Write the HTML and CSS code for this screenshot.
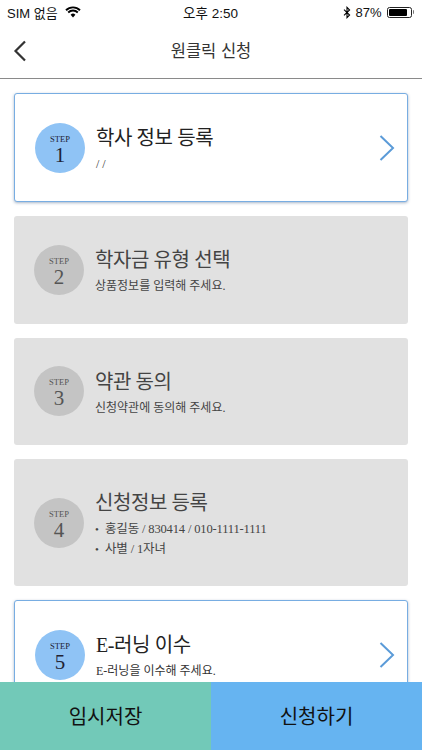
FILE: index.html
```html
<!DOCTYPE html>
<html lang="ko">
<head>
<meta charset="utf-8">
<title>원클릭 신청</title>
<link rel="stylesheet" href="styles.css">
</head>
<body>
<div class="app">
  <div class="status">
    <div class="status-left">
      <span>SIM 없음</span>
      <svg class="wifi" width="16" height="12" viewBox="0 0 16 12"><path d="M8 11.5 5.6 8.8a3.4 3.4 0 0 1 4.8 0Z" fill="#000"/><path d="M1 4.2a10 10 0 0 1 14 0M3.2 6.5a6.9 6.9 0 0 1 9.6 0" fill="none" stroke="#000" stroke-width="1.9"/></svg>
    </div>
    <div class="status-time">오후 2:50</div>
    <div class="status-right">
      <svg width="8" height="13" viewBox="0 0 8 13"><path d="M1 3.6 6.6 9 4 11.6V1.4L6.6 4 1 9.4" fill="none" stroke="#000" stroke-width="1.1"/></svg>
      <span>87%</span>
      <span class="battery"><span class="battery-fill"></span></span>
      <span class="battery-tip"></span>
    </div>
  </div>
  <header class="nav">
    <svg class="back" width="14" height="22" viewBox="0 0 14 22"><path d="M12 1.5 2.5 11l9.500 9.500" fill="none" stroke="#333" stroke-width="2.200"/></svg>
    <h1 class="nav-title">원클릭 신청</h1>
  </header>
  <main class="steps">
    <section class="card card-active card-s1">
      <div class="badge"><span class="badge-label">STEP</span><span class="badge-num">1</span></div>
      <div class="info"><h2 class="info-title">학사 정보 등록</h2><p class="info-sub">/ /</p></div>
      <svg class="chevron" width="16" height="28" viewBox="0 0 16 28"><path d="M1.500 2 14 14 1.500 26" fill="none" stroke="#5b9bd8" stroke-width="2"/></svg>
    </section>
    <section class="card card-off card-s2">
      <div class="badge"><span class="badge-label">STEP</span><span class="badge-num">2</span></div>
      <div class="info"><h2 class="info-title">학자금 유형 선택</h2><p class="info-sub">상품정보를 입력해 주세요.</p></div>
    </section>
    <section class="card card-off card-s2">
      <div class="badge"><span class="badge-label">STEP</span><span class="badge-num">3</span></div>
      <div class="info"><h2 class="info-title">약관 동의</h2><p class="info-sub">신청약관에 동의해 주세요.</p></div>
    </section>
    <section class="card card-off card-s4">
      <div class="badge"><span class="badge-label">STEP</span><span class="badge-num">4</span></div>
      <div class="info">
        <h2 class="info-title">신청정보 등록</h2>
        <ul class="info-list">
          <li>홍길동 / 830414 / 010-1111-1111</li>
          <li>사별 / 1자녀</li>
        </ul>
      </div>
    </section>
    <section class="card card-active card-s1">
      <div class="badge"><span class="badge-label">STEP</span><span class="badge-num">5</span></div>
      <div class="info"><h2 class="info-title">E-러닝 이수</h2><p class="info-sub">E-러닝을 이수해 주세요.</p></div>
      <svg class="chevron" width="16" height="28" viewBox="0 0 16 28"><path d="M1.500 2 14 14 1.500 26" fill="none" stroke="#5b9bd8" stroke-width="2"/></svg>
    </section>
  </main>
  <footer class="actions">
    <button class="action action-save">임시저장</button>
    <button class="action action-apply">신청하기</button>
  </footer>
</div>
</body>
</html>
```
FILE: styles.css
```css
* { box-sizing: border-box; }
html, body { margin: 0; padding: 0; }
body { background: #fff; font-family: "Liberation Serif", "Noto Sans CJK KR", serif; color: #222; }
.app { position: relative; width: 422px; height: 750px; overflow: hidden; background: #fff; }

.status { height: 24px; display: grid; grid-template-columns: 1fr auto 1fr; align-items: center; padding: 0 8px 0 7px; font-family: "Liberation Sans", "Noto Sans CJK KR", sans-serif; font-size: 13px; color: #111; }
.status-left { display: flex; align-items: center; gap: 7px; }
.status-time { font-size: 13.500px; }
.status-right { display: flex; align-items: center; justify-content: flex-end; gap: 3px; }
.status-right svg { margin-right: 1px; }
.battery { width: 25px; height: 11px; border: 1px solid #222; border-radius: 2.500px; padding: 1px; margin-left: 2px; display: block; }
.battery-fill { display: block; height: 100%; width: 87%; background: #000; border-radius: 1px; }
.battery-tip { width: 1.500px; height: 4px; background: #777; margin-left: -2px; border-radius: 0 1px 1px 0; }

.nav { position: relative; height: 55px; display: flex; align-items: center; justify-content: center; border-bottom: 1px solid #8a8a8a; }
.back { position: absolute; left: 13px; top: 16px; }
.nav-title { margin: 0 0 3px; font-family: "Noto Sans CJK KR", sans-serif; font-size: 16.500px; font-weight: 400; color: #333; }

.steps { display: flex; flex-direction: column; gap: 14px; padding: 14px 14px 0; }
.card { position: relative; display: flex; align-items: center; border-radius: 3px; flex-shrink: 0; }
.card-active { background: #fff; border: 1px solid #78ade2; box-shadow: 0 1px 3px rgba(60,90,130,.45); padding-left: 20px; }
.card-off { background: #e1e1e1; padding-left: 20px; }
.card-s1 { height: 109px; }
.card-s2 { height: 107.500px; }
.card-s4 { height: 127px; }

.badge { width: 50px; height: 50px; border-radius: 50%; display: flex; flex-direction: column; align-items: center; justify-content: center; flex-shrink: 0; padding-top: 4px; }
.card-active .badge { background: #8fc3f5; color: #223; }
.card-off .badge { background: #c4c4c4; color: #555; }
.badge-label { font-size: 8.500px; line-height: 10px; }
.badge-num { font-size: 21px; line-height: 22px; }

.info { margin-left: 11px; min-width: 0; padding-top: 2px; }
.info-title { margin: 0; font-family: "Liberation Serif", "Noto Sans CJK KR", serif; font-size: 20px; font-weight: 400; line-height: 28px; letter-spacing: -.4px; color: #222; }
.card-off .info-title { color: #444; }
.info-sub { margin: 3px 0 0; font-size: 12px; line-height: 18px; color: #333; }
.card-off .info-sub { color: #444; }
.info-list { list-style: none; margin: 2px 0 0; padding: 0; font-size: 12.500px; line-height: 20px; letter-spacing: -.15px; color: #444; }
.info-list li::before { content: "•"; display: inline-block; width: 10px; font-size: 11px; }

.chevron { position: absolute; right: 12px; top: 40px; }

.actions { position: absolute; left: 0; right: 0; bottom: 0; height: 68px; display: grid; grid-template-columns: 211px 211px; }
.action { border: 0; padding: 0 0 2px; font-family: "Noto Sans CJK KR", sans-serif; font-size: 20px; color: #111; }
.action-save { background: #72c9b8; }
.action-apply { background: #66b4f1; }
```
